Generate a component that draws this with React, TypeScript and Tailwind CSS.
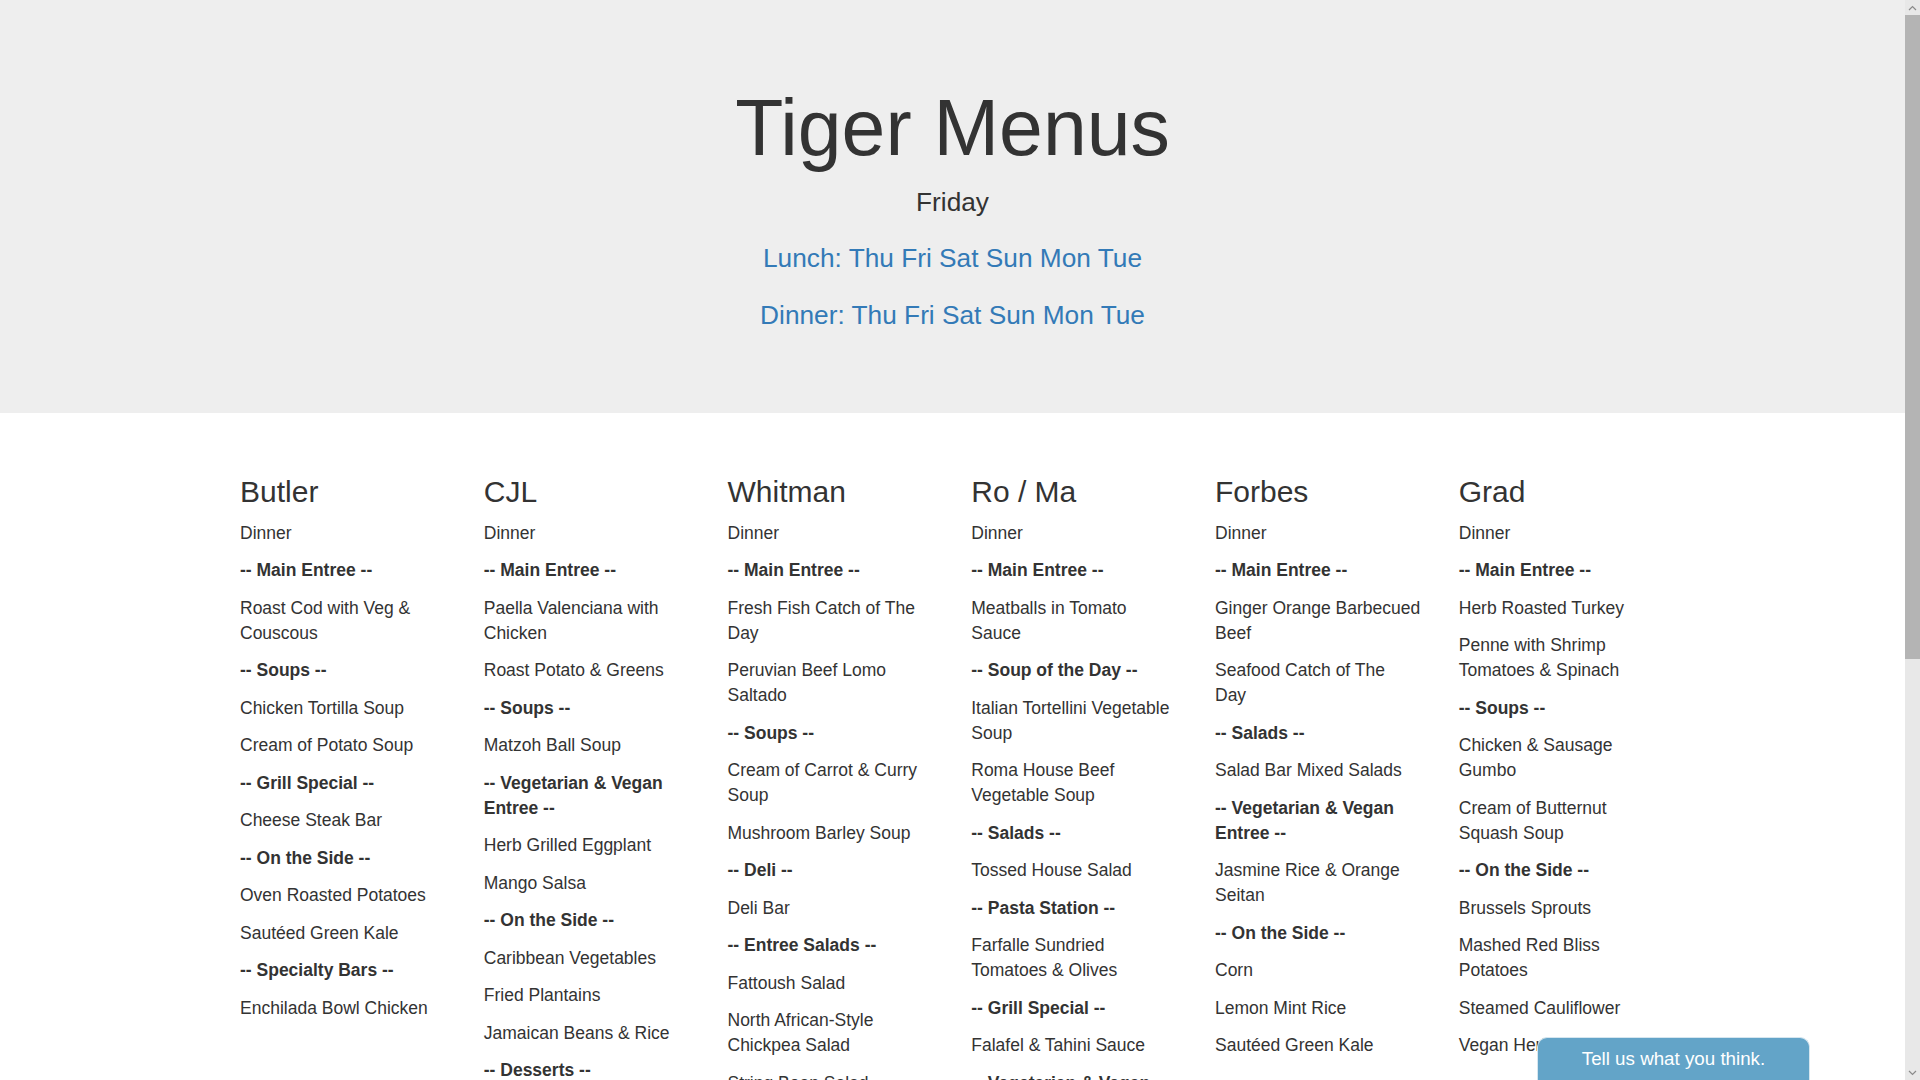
import React from "react";

type Line = { t: string; b?: boolean };

const h = (t: string): Line => ({ t: `-- ${t} --`, b: true });
const i = (t: string): Line => ({ t });

const halls: { name: string; items: Line[] }[] = [
  {
    name: "Butler",
    items: [
      i("Dinner"),
      h("Main Entree"),
      i("Roast Cod with Veg & Couscous"),
      h("Soups"),
      i("Chicken Tortilla Soup"),
      i("Cream of Potato Soup"),
      h("Grill Special"),
      i("Cheese Steak Bar"),
      h("On the Side"),
      i("Oven Roasted Potatoes"),
      i("Sautéed Green Kale"),
      h("Specialty Bars"),
      i("Enchilada Bowl Chicken"),
    ],
  },
  {
    name: "CJL",
    items: [
      i("Dinner"),
      h("Main Entree"),
      i("Paella Valenciana with Chicken"),
      i("Roast Potato & Greens"),
      h("Soups"),
      i("Matzoh Ball Soup"),
      h("Vegetarian & Vegan Entree"),
      i("Herb Grilled Eggplant"),
      i("Mango Salsa"),
      h("On the Side"),
      i("Caribbean Vegetables"),
      i("Fried Plantains"),
      i("Jamaican Beans & Rice"),
      h("Desserts"),
      i("Coconut Layer Cake"),
    ],
  },
  {
    name: "Whitman",
    items: [
      i("Dinner"),
      h("Main Entree"),
      i("Fresh Fish Catch of The Day"),
      i("Peruvian Beef Lomo Saltado"),
      h("Soups"),
      i("Cream of Carrot & Curry Soup"),
      i("Mushroom Barley Soup"),
      h("Deli"),
      i("Deli Bar"),
      h("Entree Salads"),
      i("Fattoush Salad"),
      i("North African-Style Chickpea Salad"),
      i("String Bean Salad"),
      h("Grill Special"),
      i("Black Bean Burger"),
      h("Vegetarian & Vegan Entree"),
      i("Grilled Tofu with Peppers"),
      i("Herb Roasted Potatoes"),
      h("On the Side"),
      i("Steamed Broccoli"),
      i("Jasmine Rice"),
      i("Roasted Carrots"),
      h("Desserts"),
      i("Chocolate Chip Cookies"),
      i("Fresh Fruit"),
    ],
  },
  {
    name: "Ro / Ma",
    items: [
      i("Dinner"),
      h("Main Entree"),
      i("Meatballs in Tomato Sauce"),
      h("Soup of the Day"),
      i("Italian Tortellini Vegetable Soup"),
      i("Roma House Beef Vegetable Soup"),
      h("Salads"),
      i("Tossed House Salad"),
      h("Pasta Station"),
      i("Farfalle Sundried Tomatoes & Olives"),
      h("Grill Special"),
      i("Falafel & Tahini Sauce"),
      h("Vegetarian & Vegan Entree"),
      i("Chickpea & Spinach Stew"),
      h("On the Side"),
      i("Garlic Bread"),
      i("Sautéed Zucchini"),
      h("Desserts"),
      i("Tiramisu"),
    ],
  },
  {
    name: "Forbes",
    items: [
      i("Dinner"),
      h("Main Entree"),
      i("Ginger Orange Barbecued Beef"),
      // wraps after "The" in the original rendering
      i("Seafood Catch of The\nDay"),
      h("Salads"),
      i("Salad Bar Mixed Salads"),
      h("Vegetarian & Vegan Entree"),
      i("Jasmine Rice & Orange Seitan"),
      h("On the Side"),
      i("Corn"),
      i("Lemon Mint Rice"),
      i("Sautéed Green Kale"),
    ],
  },
  {
    name: "Grad",
    items: [
      i("Dinner"),
      h("Main Entree"),
      i("Herb Roasted Turkey"),
      i("Penne with Shrimp Tomatoes & Spinach"),
      h("Soups"),
      i("Chicken & Sausage Gumbo"),
      i("Cream of Butternut Squash Soup"),
      h("On the Side"),
      i("Brussels Sprouts"),
      i("Mashed Red Bliss Potatoes"),
      i("Steamed Cauliflower"),
      i("Vegan Herb Stuffing"),
    ],
  },
];

const days = ["Thu", "Fri", "Sat", "Sun", "Mon", "Tue"];

const DayLinks = ({ meal }: { meal: string }) => (
  <p className="mb-[18.75px] text-[26.25px] leading-[37.5px]">
    <a href="#" className="text-[#337ab7] no-underline">
      {meal}:
    </a>
    {days.map((d) => (
      <React.Fragment key={d}>
        {" "}
        <a href="#" className="text-[#337ab7] no-underline">
          {d}
        </a>
      </React.Fragment>
    ))}
  </p>
);

// fake browser scrollbar so the page is laid out at 1905px like the original
const ScrollBar = () => (
  <div className="fixed top-0 right-0 flex h-screen w-[15px] flex-col bg-[#e8e8e8]">
    <div className="flex h-[15px] items-center justify-center">
      <svg width="9" height="6" viewBox="0 0 9 6">
        <path d="M1 5 L4.5 1.5 L8 5" fill="none" stroke="#8a8a8a" strokeWidth="1.2" />
      </svg>
    </div>
    <div className="h-[644px] bg-[#b4b4b4]" />
    <div className="flex-1" />
    <div className="flex h-[15px] items-center justify-center">
      <svg width="9" height="6" viewBox="0 0 9 6">
        <path d="M1 1 L4.5 4.5 L8 1" fill="none" stroke="#8a8a8a" strokeWidth="1.2" />
      </svg>
    </div>
  </div>
);

export default function App() {
  return (
    <div className="min-h-screen bg-white pr-[15px] font-['Liberation_Sans',Arial,sans-serif] text-[17.5px] leading-[25px] text-[#333]">
      <div className="mb-[37.5px] bg-[#eee] pt-[60px] pb-[60px] text-center">
        <h1 className="mt-[25px] mb-[12.5px] text-[78.75px] leading-[1.1] font-normal">
          Tiger Menus
        </h1>
        <p className="mb-[18.75px] text-[26.25px] leading-[37.5px]">Friday</p>
        <DayLinks meal="Lunch" />
        <DayLinks meal="Dinner" />
      </div>

      <div className="mx-auto w-[1462.5px] px-[18.75px] pb-[40px]">
        <div className="-mx-[18.75px] flex">
          {halls.map((hall) => (
            <div key={hall.name} className="w-[243.75px] px-[18.75px]">
              <h3 className="mt-[25px] mb-[12.5px] text-[30px] leading-[33px] font-normal">
                {hall.name}
              </h3>
              {hall.items.map((it, k) => (
                <p
                  key={k}
                  className={`mb-[12.5px] whitespace-pre-line ${it.b ? "font-bold" : ""}`}
                >
                  {it.t}
                </p>
              ))}
            </div>
          ))}
        </div>
      </div>

      <button className="fixed bottom-0 right-[110px] h-[43px] w-[273px] rounded-t-[10px] border border-b-0 border-[#d6e6ef] bg-[#63a4c8] pb-[2px] text-[18.75px] text-white">
        Tell us what you think.
      </button>

      <ScrollBar />
    </div>
  );
}
